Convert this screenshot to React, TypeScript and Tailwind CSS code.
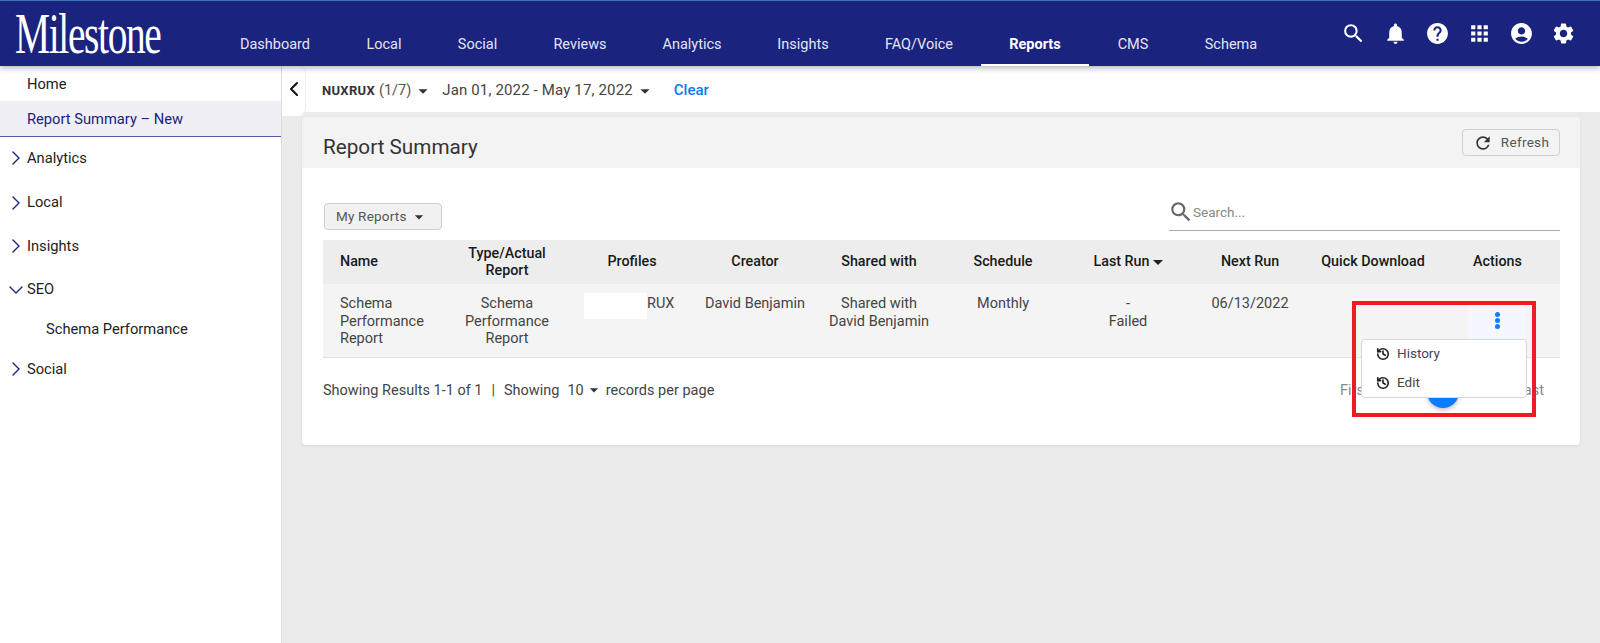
import React from "react";
import { ChevronRight, ChevronDown, ChevronLeft, History } from "lucide-react";
import { MdSearch, MdNotifications, MdHelp, MdApps, MdAccountCircle, MdSettings, MdRefresh, MdArrowDropDown } from "react-icons/md";

const nav = ["Dashboard", "Local", "Social", "Reviews", "Analytics", "Insights", "FAQ/Voice", "Reports", "CMS", "Schema"];
const navW = [126, 92, 95, 110, 114, 108, 124, 108, 88, 108];

function Side({ label, open, h, up }: { label: string; open?: boolean; h: string; up?: boolean }) {
  return (
    <div className={`flex items-center pl-[4px] text-[14.7px] text-[#222] ${h} ${up ? "pb-[2px]" : ""}`}>
      {open ? <ChevronDown size={24} strokeWidth={1.4} className="text-[#1a237e] shrink-0" /> : <ChevronRight size={24} strokeWidth={1.4} className="text-[#1a237e] shrink-0" />}
      <span className="-ml-[1px]">{label}</span>
    </div>
  );
}

export default function App() {
  return (
    <div className="relative w-[1600px] h-[643px] overflow-hidden bg-[#ebebeb] font-['Roboto',sans-serif] text-[14px] text-[#444]">
      <header className="relative z-10 h-[66px] bg-[#1a237e] border-t border-[#3b7ab5] flex shadow-[0_2px_6px_rgba(0,0,0,0.3)]">
        <div className="w-[212px] shrink-0 pl-[15px] pt-[3px] text-white text-[58px] leading-[60px] font-['Liberation_Serif',serif] tracking-[-2px] origin-[15px_50%] scale-x-[0.68] whitespace-nowrap">Milestone</div>
        <nav className="flex items-end text-[14.5px] text-[#e3e5f2]">
          {nav.map((n, i) => (
            <div key={n} style={{ width: navW[i] }} className={`h-[42px] pt-[2px] flex items-center justify-center ${n === "Reports" ? "font-bold text-white border-b-2 border-white" : "border-b-2 border-transparent"}`}>{n}</div>
          ))}
        </nav>
        <div className="ml-auto mr-[24px] flex items-center gap-[17px] text-white h-[64px]">
          <MdSearch size={25} /><MdNotifications size={25} /><MdHelp size={25} /><MdApps size={25} /><MdAccountCircle size={25} /><MdSettings size={25} />
        </div>
      </header>
      <div className="flex h-[577px]">
        <aside className="w-[282px] h-full bg-white border-r border-[#dcdcdc] shrink-0">
          <div className="h-[35px] flex items-center pl-[27px] pt-[1px] text-[14.7px] text-[#222]">Home</div>
          <div className="h-[34px] flex items-center pl-[27px] pt-[1px] text-[14.7px] text-[#1a237e] bg-[#f0eff5] border-b border-[#5058a8] box-content">Report Summary – New</div>
          <Side label="Analytics" h="h-[44px]" up />
          <Side label="Local" h="h-[43px]" />
          <Side label="Insights" h="h-[44px]" />
          <Side label="SEO" open h="h-[43px]" />
          <div className="h-[36px] flex items-center pl-[46px] text-[14.7px] text-[#222]">Schema Performance</div>
          <Side label="Social" h="h-[44px]" />
        </aside>
        <main className="flex-1 min-w-0">
          <div className="h-[46px] bg-white flex items-center text-[15px]">
            <div className="relative z-[1] self-start w-[24px] h-[50px] bg-white border-r border-[#eeeeee] rounded-r-[8px] flex items-start justify-center mr-[16px] pt-[11px]"><ChevronLeft size={24} strokeWidth={2} className="text-[#111] shrink-0" /></div>
            <div className="flex items-center pt-[3px]">
              <span className="font-bold text-[13px] text-[#333] tracking-[0.3px]">NUXRUX</span>
              <span className="ml-[4px] text-[14.5px] text-[#555]">(1/7)</span>
              <MdArrowDropDown size={22} className="text-[#333] ml-[1px]" />
              <span className="ml-[8px] text-[#444] tracking-[0.15px]">Jan 01, 2022 - May 17, 2022</span>
              <MdArrowDropDown size={22} className="text-[#333] ml-[1px]" />
              <span className="ml-[18px] font-medium text-[#0b7bec]">Clear</span>
            </div>
          </div>
          <section className="mt-[5px] ml-[20px] w-[1278px] h-[328px] bg-white rounded-[4px] shadow-[0_1px_3px_rgba(0,0,0,0.08)] overflow-hidden">
            <div className="h-[51px] bg-[#f3f3f3] flex items-center justify-between pl-[21px] pr-[20px]">
              <h1 className="text-[20.7px] text-[#333] pt-[11px]">Report Summary</h1>
              <button className="h-[27px] w-[98px] border border-[#cfcfcf] rounded-[4px] flex items-center justify-center gap-[8px] text-[13.5px] text-[#555] tracking-[0.3px]"><MdRefresh size={20} className="text-[#333]" />Refresh</button>
            </div>
            <div className="pl-[21px] pr-[20px]">
              <div className="h-[72px] flex items-end justify-between pb-[10px]">
                <button className="ml-[1px] h-[27px] w-[118px] bg-[#f1f1f1] border border-[#cfcfcf] rounded-[4px] flex items-center pl-[11px] text-[13.5px] text-[#555] tracking-[0.2px]">My Reports<MdArrowDropDown size={20} className="ml-[2px] text-[#333]" /></button>
                <div className="w-[391px] h-[32px] border-b border-[#aaa] flex items-start text-[#888] text-[13.5px] mb-[-1px]"><MdSearch size={26} className="text-[#666] -ml-[1px] -mr-[1px]" /><span className="pt-[3px]">Search...</span></div>
              </div>
              <table className="w-[1237px] table-fixed border-collapse text-[14.5px] leading-[17.5px] text-[#444]">
                <colgroup>
                  <col className="w-[120px]" /><col className="w-[128px]" /><col className="w-[122px]" /><col className="w-[124px]" /><col className="w-[124px]" /><col className="w-[124px]" /><col className="w-[126px]" /><col className="w-[118px]" /><col className="w-[128px]" /><col className="w-[123px]" />
                </colgroup>
                <thead>
                  <tr className="h-[44px] bg-[#ededed] text-[#1a1a1a] text-[14.3px] text-center">
                    <th className="font-medium pl-[17px] text-left">Name</th>
                    <th className="font-medium">Type/Actual<br />Report</th>
                    <th className="font-medium">Profiles</th>
                    <th className="font-medium">Creator</th>
                    <th className="font-medium">Shared with</th>
                    <th className="font-medium">Schedule</th>
                    <th className="font-medium"><span className="inline-flex items-center">Last Run<span className="ml-[3px] w-0 h-0 border-x-[5px] border-x-transparent border-t-[5px] border-t-[#222]" /></span></th>
                    <th className="font-medium">Next Run</th>
                    <th className="font-medium whitespace-nowrap">Quick Download</th>
                    <th className="font-medium pr-[2px]">Actions</th>
                  </tr>
                </thead>
                <tbody>
                  <tr className="h-[73px] bg-[#f4f4f4] border-b border-[#e2e2e2] align-top text-center">
                    <td className="pt-[11px] pl-[17px] text-left">Schema Performance Report</td>
                    <td className="pt-[11px] pl-[20px] pr-[20px]">Schema Performance Report</td>
                    <td className="pt-[11px] pl-[76px] text-left relative"><span className="absolute left-[13px] top-[9px] w-[63px] h-[26px] bg-white" />RUX</td>
                    <td className="pt-[11px]">David Benjamin</td>
                    <td className="pt-[11px]">Shared with<br />David Benjamin</td>
                    <td className="pt-[11px]">Monthly</td>
                    <td className="pt-[11px]">-<br />Failed</td>
                    <td className="pt-[11px]">06/13/2022</td>
                    <td />
                    <td className="relative"><div className="absolute left-[31px] top-[18px] w-[58px] h-[37px] bg-[#f4f8fe] flex justify-center pt-[10px]"><span className="flex flex-col gap-[1px]"><i className="block w-[5px] h-[5px] rounded-full bg-[#0a7cff]" /><i className="block w-[5px] h-[5px] rounded-full bg-[#0a7cff]" /><i className="block w-[5px] h-[5px] rounded-full bg-[#0a7cff]" /></span></div></td>
                  </tr>
                </tbody>
              </table>
              <div className="relative mt-[22px] flex items-center text-[14.5px] text-[#444]">
                <span>Showing Results 1-1 of 1</span>
                <span className="mx-[9px]">|</span>
                <span>Showing</span>
                <span className="ml-[8px]">10</span>
                <MdArrowDropDown size={20} className="text-[#333]" />
                <span className="ml-[2px]">records per page</span>
                <span className="absolute left-[1017px] top-0 text-[#888] text-[14.5px]">First</span>
                <span className="absolute left-[1193px] top-0 text-[#888] text-[14.5px]">Last</span>
                <span className="absolute left-[1104px] -top-[4px] w-[32px] h-[32px] rounded-full bg-[#0a7cff] shadow-[0_2px_4px_rgba(0,0,0,0.25)]" />
              </div>
            </div>
          </section>
        </main>
      </div>
      <div className="absolute left-[1361px] top-[339px] w-[166px] h-[59px] bg-white border border-[#d8d8d8] rounded-[4px] text-[13.5px] text-[#444] z-20">
        <div className="h-[27px] flex items-center pl-[14px] gap-[7px]"><History size={14} strokeWidth={2.8} className="text-[#222]" /><span className="text-[#3d4560]">History</span></div>
        <div className="h-[29px] pt-[2px] flex items-center pl-[14px] gap-[7px]"><History size={14} strokeWidth={2.8} className="text-[#222]" /><span>Edit</span></div>
      </div>
      <div className="absolute left-[1352px] top-[301px] w-[184px] h-[116px] border-[4px] border-[#ed1c24] z-30" />
    </div>
  );
}
